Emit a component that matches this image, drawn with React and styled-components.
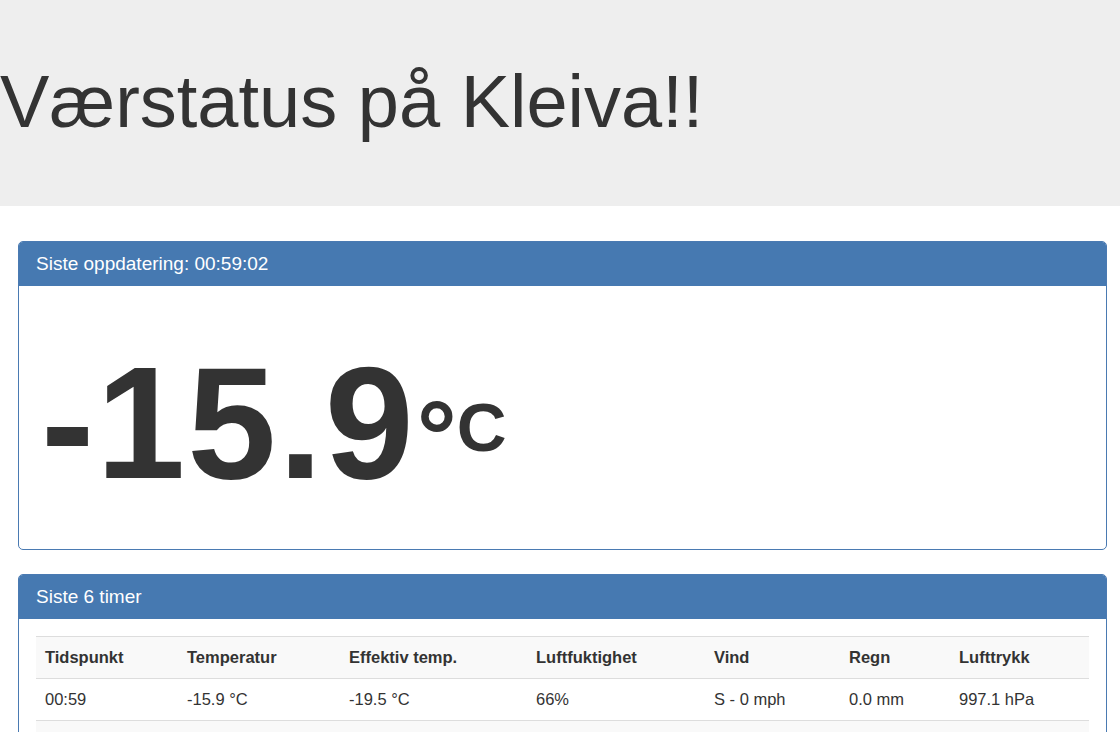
import React from 'react';
import styled, { createGlobalStyle } from 'styled-components';

const GlobalStyle = createGlobalStyle`
  body {
    margin: 0;
    background: #fff;
    color: #333;
    font-family: "Liberation Sans", Helvetica, Arial, sans-serif;
  }
`;

const Jumbotron = styled.div`
  background: #eee;
  padding: 61px 0 63px;
`;

const Title = styled.h1`
  margin: 0;
  font-size: 74px;
  line-height: 82px;
  font-weight: 400;
  color: #333;
`;

const Container = styled.div`
  padding: 35px 13px 0 18px;
`;

const Panel = styled.div`
  border: 1px solid #4a7ab2;
  border-radius: 5px;
  margin-bottom: 24px;
  overflow: hidden;
`;

const PanelHeading = styled.div`
  background: #4679b1;
  color: #fff;
  padding: 12px 17px;
  font-size: 19px;
  line-height: 20px;
`;

const PanelBody = styled.div`
  padding: ${({ $top }) => $top || 18}px 17px 18px;
`;

const BigTemp = styled.h1`
  margin: 31px 0 20px;
  padding-left: 5px;
  font-size: 160px;
  line-height: 176px;
  font-weight: 700;
  letter-spacing: 2px;
`;

const Unit = styled.span`
  font-size: 69px;
  line-height: 0;
  position: relative;
  top: -27px;
  margin-left: 1px;
  letter-spacing: 0;
`;

const Degree = styled.span`
  font-size: 100px;
  line-height: 0;
  position: relative;
  top: 20px;
`;

const Table = styled.table`
  width: 100%;
  border-collapse: collapse;
  table-layout: fixed;
  font-size: 16.5px;
  line-height: 23px;
`;

const Row = styled.tr`
  background: ${({ $shade }) => ($shade ? '#f9f9f9' : '#fff')};
`;

const Th = styled.th`
  text-align: left;
  font-weight: 700;
  padding: 9px 9px;
  border-top: 1px solid #ddd;
`;

const Td = styled.td`
  padding: 9px 9px;
  border-top: 1px solid #ddd;
`;

const columns = [
  ['Tidspunkt', 142],
  ['Temperatur', 162],
  ['Effektiv temp.', 187],
  ['Luftfuktighet', 178],
  ['Vind', 135],
  ['Regn', 110],
  ['Lufttrykk', 139],
];

const rows = [
  ['00:59', '-15.9 °C', '-19.5 °C', '66%', 'S - 0 mph', '0.0 mm', '997.1 hPa'],
  ['23:59', '-15.2 °C', '-18.7 °C', '65%', 'S - 0 mph', '0.0 mm', '997.4 hPa'],
  ['22:59', '-14.6 °C', '-17.9 °C', '64%', 'SV - 1 mph', '0.0 mm', '997.8 hPa'],
  ['21:59', '-13.8 °C', '-16.8 °C', '63%', 'SV - 1 mph', '0.0 mm', '998.0 hPa'],
];

export default function App() {
  return (
    <>
      <GlobalStyle />
      <Jumbotron>
        <Title>Værstatus på Kleiva!!</Title>
      </Jumbotron>
      <Container>
        <Panel>
          <PanelHeading>Siste oppdatering: 00:59:02</PanelHeading>
          <PanelBody>
            <BigTemp>
              -15.9<Unit><Degree>°</Degree>C</Unit>
            </BigTemp>
          </PanelBody>
        </Panel>
        <Panel>
          <PanelHeading>Siste 6 timer</PanelHeading>
          <PanelBody $top={17}>
            <Table>
              <colgroup>
                {columns.map(([name, w]) => (
                  <col key={name} style={{ width: w }} />
                ))}
              </colgroup>
              <tbody>
                <Row $shade>
                  {columns.map(([name]) => (
                    <Th key={name}>{name}</Th>
                  ))}
                </Row>
                {rows.map((r, i) => (
                  <Row key={r[0]} $shade={i % 2 === 1}>
                    {r.map((c, j) => (
                      <Td key={j}>{c}</Td>
                    ))}
                  </Row>
                ))}
              </tbody>
            </Table>
          </PanelBody>
        </Panel>
      </Container>
    </>
  );
}
